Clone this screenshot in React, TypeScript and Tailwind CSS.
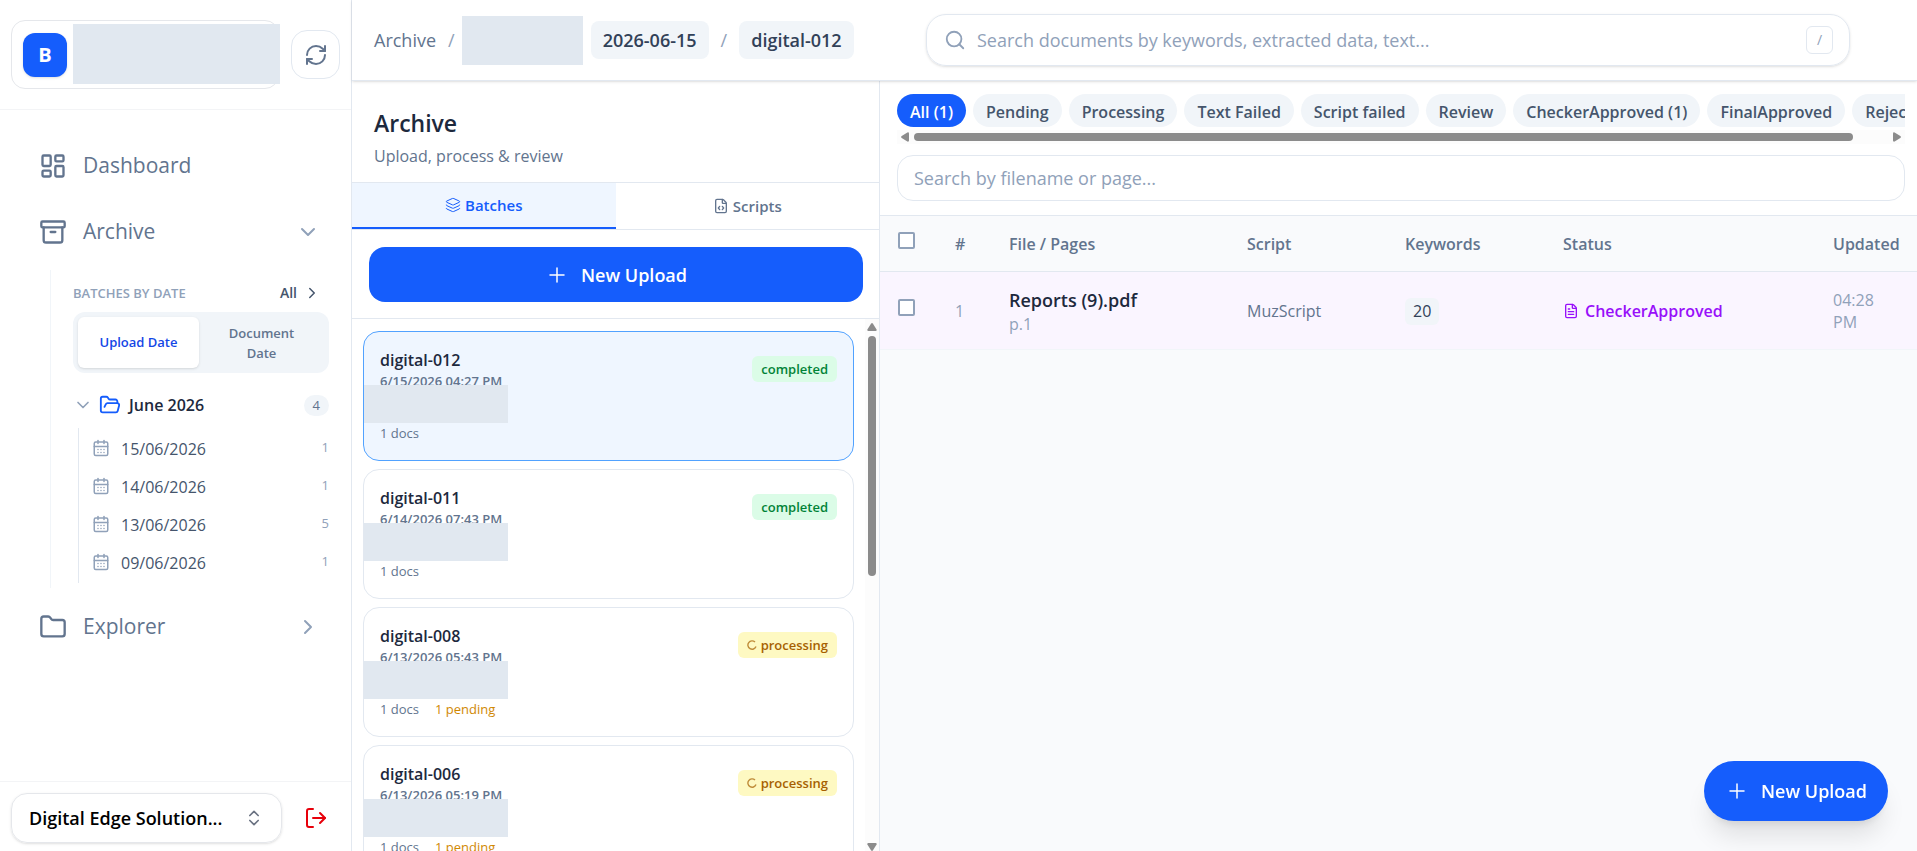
import React from "react";
import {
  Archive,
  CalendarDays,
  ChevronDown,
  ChevronRight,
  ChevronsUpDown,
  FileCode,
  FileText,
  Folder,
  FolderOpen,
  Layers,
  LayoutDashboard,
  LogOut,
  Plus,
  RefreshCw,
  Search,
} from "lucide-react";

const days = [
  { date: "15/06/2026", count: 1 },
  { date: "14/06/2026", count: 1 },
  { date: "13/06/2026", count: 5 },
  { date: "09/06/2026", count: 1 },
];

type Batch = { name: string; time: string; done: boolean; active?: boolean };

const batches: Batch[] = [
  { name: "digital-012", time: "6/15/2026 04:27 PM", done: true, active: true },
  { name: "digital-011", time: "6/14/2026 07:43 PM", done: true },
  { name: "digital-008", time: "6/13/2026 05:43 PM", done: false },
  { name: "digital-006", time: "6/13/2026 05:19 PM", done: false },
];

const filters = [
  "All (1)",
  "Pending",
  "Processing",
  "Text Failed",
  "Script failed",
  "Review",
  "CheckerApproved (1)",
  "FinalApproved",
  "Rejected",
];

function Sidebar() {
  return (
    <aside className="flex w-88 shrink-0 flex-col border-r border-slate-200 bg-white">
      <div className="flex h-[110px] shrink-0 items-center gap-3 border-b border-gray-100 px-[11px]">
        <div className="relative flex h-[69px] min-w-0 flex-1 items-center rounded-[14px] border border-gray-200 pl-[11px]">
          <div className="flex size-11 items-center justify-center rounded-xl bg-[#155dfc] text-xl font-bold text-white shadow-sm">
            B
          </div>
          <div className="absolute top-[3px] left-[61px] h-[60px] w-[207px] bg-[#e1e8f0]" />
        </div>
        <button
          aria-label="Refresh"
          className="flex size-[49px] shrink-0 items-center justify-center rounded-2xl border border-slate-200 text-slate-500"
        >
          <RefreshCw className="size-6" />
        </button>
      </div>

      <nav className="flex flex-1 flex-col px-[11px] pt-[23px]">
        <a href="#dashboard" className="flex h-[66px] items-center gap-4 pr-5 pl-7 text-[21px] font-medium text-slate-500">
          <LayoutDashboard className="size-7" />
          Dashboard
        </a>
        <a href="#archive" className="flex h-[66px] items-center gap-4 pr-5 pl-7 text-[21px] font-medium text-slate-500">
          <Archive className="size-7" />
          <span className="flex-1">Archive</span>
          <ChevronDown className="size-6 text-slate-400" />
        </a>

        <div className="mt-[5px] ml-[39px] border-l border-slate-100 pr-[11px] pb-[5px] pl-[22px]">
          <div className="flex items-center justify-between pt-[11px] pr-2">
            <span className="text-[13px] leading-6 font-semibold text-slate-400">BATCHES BY DATE</span>
            <a href="#all" className="flex items-center gap-1.5 text-sm font-semibold text-slate-600">
              All
              <ChevronRight className="size-[18px]" />
            </a>
          </div>
          <div className="mt-[7px] flex h-[61px] rounded-xl bg-slate-100 p-[5px]">
            <button className="w-[121px] shrink-0 rounded-md bg-white text-[13px] font-semibold text-blue-700 shadow">
              Upload Date
            </button>
            <button className="flex-1 px-5 text-[13px] leading-5 font-semibold text-slate-500">Document Date</button>
          </div>

          <button className="mt-4 flex h-8 w-full items-center text-base font-semibold text-slate-800">
            <ChevronDown className="mr-1.5 size-5 text-slate-400" />
            <FolderOpen className="mr-2 size-[22px] text-[#155dfc]" />
            <span className="flex-1 text-left">June 2026</span>
            <span className="rounded-full bg-slate-100 px-[9px] text-[13px] leading-[21px] font-normal text-slate-500">4</span>
          </button>

          <ul className="mt-[7px] ml-[5px] flex flex-col border-l border-slate-200 pt-px">
            {days.map((d) => (
              <li key={d.date} className="h-[38px] pl-[13px] last:h-10">
                <a href="#day" className="flex h-[38px] items-center text-base text-slate-600">
                  <CalendarDays className="mr-[11px] size-[18px] text-slate-400" />
                  <span className="flex-1 pt-0.5">{d.date}</span>
                  <span className="text-[13px] text-slate-400">{d.count}</span>
                </a>
              </li>
            ))}
          </ul>
        </div>

        <a href="#explorer" className="mt-1.5 flex h-[66px] items-center gap-4 pr-5 pl-7 text-[21px] font-medium text-slate-500">
          <Folder className="size-7" />
          <span className="flex-1">Explorer</span>
          <ChevronRight className="size-6 text-slate-400" />
        </a>
      </nav>

      <div className="flex h-[70px] shrink-0 items-center border-t border-gray-100 px-[11px] pt-0.5">
        <button className="flex h-[50px] w-[271px] items-center justify-between rounded-2xl border border-gray-200 px-[17px] text-lg font-semibold text-black shadow-sm">
          <span>Digital Edge Solution...</span>
          <ChevronsUpDown className="size-5 text-gray-500" />
        </button>
        <button aria-label="Log out" className="ml-[22px] text-red-600">
          <LogOut className="size-6" />
        </button>
      </div>
    </aside>
  );
}

function TopBar() {
  return (
    <header className="relative z-10 flex h-[81px] shrink-0 items-center border-b border-slate-200 bg-white pl-[22px] shadow-sm">
      <nav aria-label="Breadcrumb" className="flex w-[552px] shrink-0 items-center text-lg text-slate-500">
        <a href="#archive">Archive</a>
        <span className="ml-3 text-slate-400">/</span>
        <span className="ml-[7px] h-[49px] w-[121px] bg-[#e1e8f0]" />
        <a href="#date" className="ml-2 rounded-lg bg-slate-100 px-3 leading-[38px] font-semibold text-slate-700">
          2026-06-15
        </a>
        <span className="mx-3 text-slate-400">/</span>
        <a href="#batch" className="rounded-lg bg-slate-100 px-3 leading-[38px] font-semibold text-slate-700">
          digital-012
        </a>
      </nav>
      <div className="mr-[67px] flex h-[52px] min-w-0 flex-1 items-center rounded-[20px] border border-slate-200 pr-4 pl-[17px] shadow">
        <Search className="size-[22px] text-slate-400" />
        <input
          aria-label="Search documents"
          placeholder="Search documents by keywords, extracted data, text..."
          className="ml-[11px] min-w-0 flex-1 text-lg outline-none placeholder:text-slate-400"
        />
        <kbd className="flex h-7 w-[27px] items-center justify-center rounded-md border border-slate-200 font-['Open_Sans',sans-serif] text-sm text-slate-400">
          /
        </kbd>
      </div>
    </header>
  );
}

function BatchCard({ batch }: { batch: Batch }) {
  return (
    <article
      className={
        batch.active
          ? "relative h-[130px] shrink-0 rounded-2xl border border-blue-400 bg-blue-50 px-4 pt-4"
          : "relative h-[130px] shrink-0 rounded-2xl border border-slate-200 bg-white px-4 pt-4"
      }
    >
      <div className="flex items-start justify-between">
        <div>
          <h3 className="text-base leading-6 font-semibold text-slate-800">{batch.name}</h3>
          <p className="text-[13px] leading-[18px] font-semibold text-slate-500">{batch.time}</p>
        </div>
        {batch.done ? (
          <span className="mt-2 rounded-md bg-green-100 px-[9px] text-[13px] leading-[26px] font-semibold text-green-700">
            completed
          </span>
        ) : (
          <span className="mt-2 flex items-center gap-1 rounded-md bg-yellow-100 px-[9px] text-[13px] leading-[26px] font-semibold text-yellow-700">
            <svg viewBox="0 0 10 10" className="size-2.5 opacity-70" fill="none" stroke="currentColor" strokeWidth="1.4">
              <path d="M8 2A4.2 4.2 0 1 0 9 6.6" />
            </svg>
            processing
          </span>
        )}
      </div>
      <div className="absolute top-[53px] left-0 h-[38px] w-[144px] bg-[#e1e8f0]" />
      <p className="mt-[33px] flex gap-4 text-[13px] leading-5 text-slate-500">
        <span>1 docs</span>
        {!batch.done && <span className="text-yellow-600">1 pending</span>}
      </p>
    </article>
  );
}

function BatchPanel() {
  return (
    <section className="flex w-[528px] shrink-0 flex-col border-r border-slate-200 bg-white">
      <div className="h-[102px] shrink-0 border-b border-slate-200 px-[22px] pt-[26px]">
        <h1 className="text-[23px] leading-8 font-semibold text-slate-800">Archive</h1>
        <p className="text-base leading-[34px] text-slate-500">Upload, process &amp; review</p>
      </div>
      <div role="tablist" className="flex h-[47px] shrink-0 border-b border-slate-200 text-[15px] font-semibold">
        <button
          role="tab"
          aria-selected="true"
          className="flex flex-1 items-center justify-center gap-1 border-b-2 border-[#155dfc] bg-blue-50 text-[#155dfc]"
        >
          <Layers className="size-4" strokeWidth={1.5} />
          Batches
        </button>
        <button role="tab" aria-selected="false" className="flex flex-1 items-center justify-center gap-1 text-slate-500">
          <FileCode className="size-4" />
          Scripts
        </button>
      </div>
      <div className="shrink-0 border-b border-slate-200 pt-[17px] pr-4 pb-4 pl-[17px]">
        <button className="flex h-[55px] w-full items-center justify-center gap-3 rounded-2xl bg-[#155dfc] text-lg font-semibold text-white">
          <Plus className="size-6" strokeWidth={1.5} />
          New Upload
        </button>
      </div>
      <div className="flex min-h-0 flex-1">
        <div className="flex min-w-0 flex-1 flex-col gap-2 overflow-hidden px-[11px] pt-3">
          {batches.map((b) => (
            <BatchCard key={b.name} batch={b} />
          ))}
        </div>
        <div className="flex w-3.5 flex-col items-center bg-[#fcfcfc] pt-1">
          <svg viewBox="0 0 10 8" className="h-2 w-2.5 fill-[#8b8b8b]">
            <path d="M4 .7Q5 -.5 6 .7L9.6 6.4Q10 8 8.6 8H1.4Q0 8 .4 6.4Z" />
          </svg>
          <div className="mt-[5px] h-60 w-2 rounded-full bg-[#8b8b8b]" />
          <svg viewBox="0 0 10 8" className="mt-auto h-2 w-2.5 rotate-180 fill-[#8b8b8b]">
            <path d="M4 .7Q5 -.5 6 .7L9.6 6.4Q10 8 8.6 8H1.4Q0 8 .4 6.4Z" />
          </svg>
        </div>
      </div>
    </section>
  );
}

function DocumentPanel() {
  return (
    <section className="flex min-w-0 flex-1 flex-col bg-[#f9fafc]">
      <div className="border-b border-slate-200 bg-white px-[17px] pt-[13px] pr-3 pb-3.5">
        <div className="flex gap-[7px] overflow-hidden">
          {filters.map((f, i) => (
            <button
              key={f}
              className={
                i === 0
                  ? "h-[33px] shrink-0 rounded-full bg-[#155dfc] px-[13px] pt-0.5 text-base font-semibold text-white"
                  : "h-[33px] shrink-0 rounded-full bg-slate-100 px-[13px] pt-0.5 text-base font-semibold text-slate-600"
              }
            >
              {f}
            </button>
          ))}
        </div>
        <div className="mt-[3px] flex h-3.5 items-center bg-[#fcfcfc] px-1">
          <svg viewBox="0 0 8 10" className="h-2.5 w-2 shrink-0 fill-[#8b8b8b]">
            <path d="M.7 4Q-.5 5 .7 6L6.4 9.6Q8 10 8 8.6V1.4Q8 0 6.4 .4Z" />
          </svg>
          <div className="mr-10 ml-[5px] h-2 flex-1 rounded-full bg-[#8b8b8b]" />
          <svg viewBox="0 0 8 10" className="h-2.5 w-2 shrink-0 rotate-180 fill-[#8b8b8b]">
            <path d="M.7 4Q-.5 5 .7 6L6.4 9.6Q8 10 8 8.6V1.4Q8 0 6.4 .4Z" />
          </svg>
        </div>
        <input
          aria-label="Search by filename or page"
          placeholder="Search by filename or page..."
          className="mt-[11px] h-[46px] w-full rounded-2xl border border-slate-200 px-4 text-lg outline-none placeholder:text-slate-400"
        />
      </div>
      <table className="w-full table-fixed text-left text-base">
        <colgroup>
          <col className="w-[75px]" />
          <col className="w-[54px]" />
          <col />
          <col className="w-[158px]" />
          <col className="w-[158px]" />
          <col className="w-[270px]" />
          <col className="w-[84px]" />
        </colgroup>
        <thead>
          <tr className="h-[55px] border-b border-slate-200 text-slate-500 [&>th]:pt-0.5 [&>th]:font-semibold">
            <th className="pb-2 pl-[18px]">
              <input
                type="checkbox"
                aria-label="Select all"
                className="block size-[17px] appearance-none rounded-xs border-2 border-slate-400 bg-white"
              />
            </th>
            <th>#</th>
            <th>File / Pages</th>
            <th>Script</th>
            <th>Keywords</th>
            <th>Status</th>
            <th>Updated</th>
          </tr>
        </thead>
        <tbody>
          <tr className="h-[78px] border-b border-slate-100 bg-purple-50 [&>td]:pt-0.5">
            <td className="pb-2 pl-[18px]">
              <input
                type="checkbox"
                aria-label="Select Reports (9).pdf"
                className="block size-[17px] appearance-none rounded-xs border-2 border-slate-400 bg-white"
              />
            </td>
            <td className="text-slate-400">1</td>
            <td>
              <div className="text-lg leading-[26px] font-semibold text-slate-800">Reports (9).pdf</div>
              <div className="leading-[22px] text-slate-400">p.1</div>
            </td>
            <td className="text-slate-500">MuzScript</td>
            <td>
              <span className="inline-block rounded-md bg-slate-100 px-2 leading-[27px] text-slate-700">20</span>
            </td>
            <td>
              <span className="flex items-center gap-1.5 text-base font-semibold text-[#9810fa]">
                <FileText className="size-4" />
                CheckerApproved
              </span>
            </td>
            <td className="pr-7 leading-[22px] text-slate-400">04:28 PM</td>
          </tr>
        </tbody>
      </table>
    </section>
  );
}

export default function App() {
  return (
    <div className="flex h-screen overflow-hidden bg-white font-['Open_Sans','Noto_Sans',sans-serif]">
      <Sidebar />
      <div className="flex min-w-0 flex-1 flex-col">
        <TopBar />
        <main className="flex min-h-0 flex-1">
          <BatchPanel />
          <DocumentPanel />
        </main>
      </div>
      <button className="fixed right-[29px] bottom-[30px] z-20 flex h-[60px] items-center gap-3 rounded-full bg-[#155dfc] px-[21px] text-lg font-semibold text-white shadow-xl">
        <Plus className="size-6" strokeWidth={1.5} />
        New Upload
      </button>
    </div>
  );
}
